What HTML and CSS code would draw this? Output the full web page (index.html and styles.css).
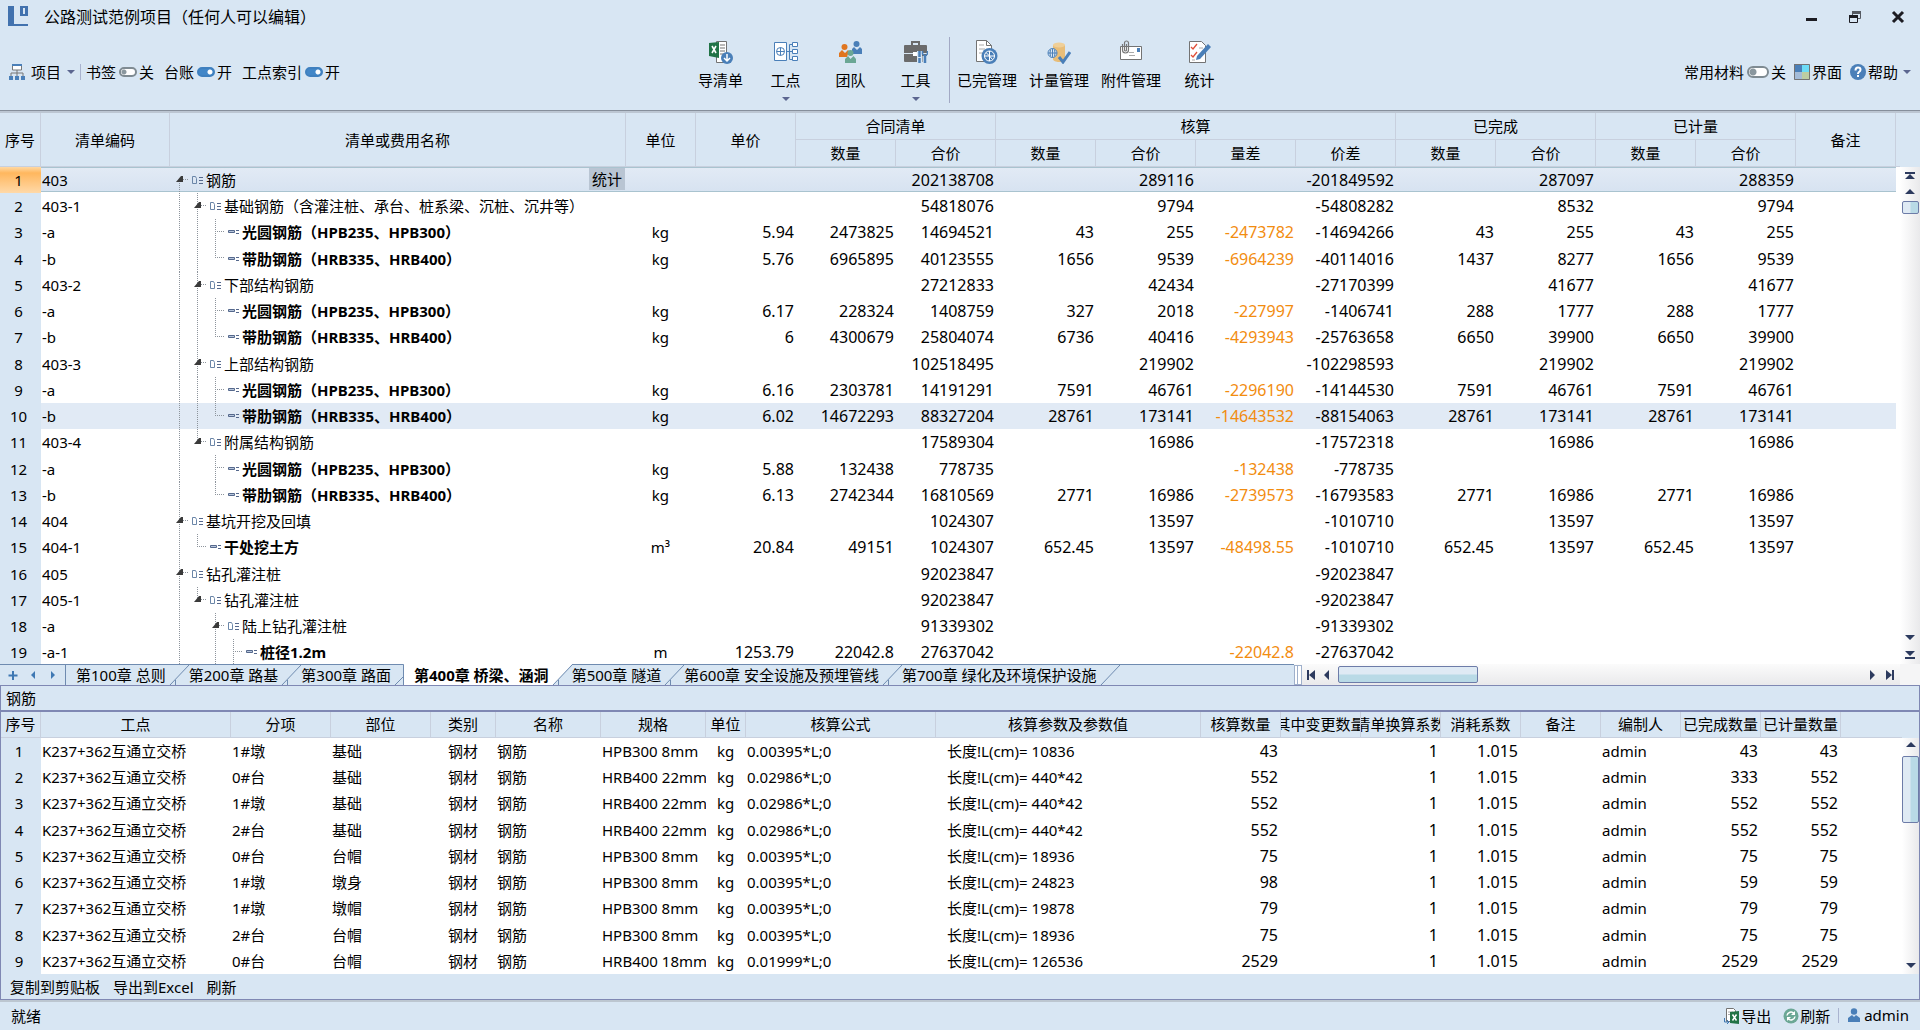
FILE: index.html
```html
<!DOCTYPE html>
<html lang="zh-CN">
<head>
<meta charset="utf-8">
<title>公路测试范例项目</title>
<link rel="stylesheet" href="styles.css">
</head>
<body>
<header class="titlebar">
  <svg class="logo" width="20" height="20" viewBox="0 0 20 20"><path d="M0 0h6v18h14v2H0z" fill="#4272ae"/><path d="M12 0h8v10h-8zM15 2v6h2V2z" fill="#4272ae" fill-rule="evenodd"/></svg>
  <h1 class="title">公路测试范例项目（任何人可以编辑）</h1>
  <div class="window-buttons">
    <button class="win" aria-label="最小化"><svg width="14" height="14"><path d="M1 8h11v3H1z" fill="#1c1c22"/></svg></button>
    <button class="win" aria-label="还原"><svg width="14" height="14"><path d="M4.500 5V1.500h8v7H9" fill="none" stroke="#555a62"/><path d="M4 1h9v3H4z" fill="#555a62"/><path d="M1.500 5.500h8v7h-8z" fill="#d8e6f3" stroke="#1c1c22"/><path d="M1 5h9v3H1z" fill="#1c1c22"/></svg></button>
    <button class="win" aria-label="关闭"><svg width="14" height="14"><path d="M2 2l10 10M12 2L2 12" stroke="#1c1c22" stroke-width="3"/></svg></button>
  </div>
</header>

<nav class="ribbon">
  <div class="ribbon-left">
    <button class="flat project"><svg width="16" height="16"><path d="M3.500 1h9v5h-9z" fill="#fff" stroke="#777"/><path d="M3 0h10v2H3z" fill="#4a7fb8"/><path d="M8 6v6M2 12V9h12v3" fill="none" stroke="#777"/><path d="M0 12h4v4H0zM6 12h4v4H6zM12 12h4v4h-4z" fill="#4a7fb8"/></svg>项目<i class="caret"></i></button>
    <label class="switch">书签<input type="checkbox"><span>关</span></label>
    <label class="switch">台账<input type="checkbox" checked><span>开</span></label>
    <label class="switch">工点索引<input type="checkbox" checked><span>开</span></label>
  </div>
  <div class="tools">
    <button class="tool"><svg width="24" height="24"><path d="M7.500 1.500h10v21h-10z" fill="#fff" stroke="#737373"/><path d="M11 5h5M11 8h5M11 11h5M11 14h4" stroke="#737373"/><path d="M0 3l10-1v16L0 16z" fill="#217346"/><path d="M3 6l4 7M7 6l-4 7" stroke="#fff" stroke-width="1.600"/><circle cx="18" cy="18" r="6" fill="#4a7fb8"/><path d="M18 14v7M15 18l3 3 3-3" fill="none" stroke="#fff" stroke-width="1.500"/></svg>导清单</button>
    <button class="tool"><svg width="24" height="24" fill="none" stroke="#4a7fb8"><path d="M.5 2.500h12v18H.5z" fill="#fff"/><circle cx="6.500" cy="11.500" r="4"/><path d="M2.500 11.500h8M6.500 7.500v8M12.500 11.500h6M15.500 4.500v15M15.500 4.500h3M15.500 19.500h3"/><path d="M18.500 2.500h5v4h-5zM18.500 9.500h5v4h-5zM18.500 16.500h5v4h-5z" fill="#fff"/></svg>工点<i class="caret"></i></button>
    <button class="tool"><svg width="24" height="24"><g fill="#4a7fb8"><circle cx="17.500" cy="4" r="3"/><path d="M13 14V9l2-2 3 3 3-3 2 2v5z"/></g><g fill="#e0761f"><circle cx="5.500" cy="7" r="3"/><path d="M0 17v-4l3-3 3 3 3-3 1 1-2 6z"/></g><g fill="#6ba795"><circle cx="11.500" cy="13" r="3"/><path d="M6 23v-4l3-3 2.500 3 3-3 2.500 3v4z"/></g></svg>团队</button>
    <button class="tool"><svg width="24" height="24"><path d="M8 5V2h7v3" fill="none" stroke="#6b6b6b" stroke-width="2"/><rect y="5" width="23" height="17" rx="1" fill="#6b6b6b"/><path d="M0 13.500h9M14 13.500h9" stroke="#d8e6f3"/><path d="M9 12h4v4H9z" fill="#fff"/><path d="M15.500 11v13M21 16v8" stroke="#d8e6f3" stroke-width="5"/><path d="M15.500 11v6M15.500 18v5M21 16v7" stroke="#4a7fb8" stroke-width="2.500"/><path d="M18.500 11v3l2.500 2 2.500-2v-3" fill="none" stroke="#4a7fb8" stroke-width="1.500"/></svg>工具<i class="caret"></i></button>
    <span class="divider"></span>
    <button class="tool wide"><svg width="24" height="24"><path d="M1.500.5h10l5 5v16h-15z" fill="#fff" stroke="#737373"/><path d="M11.500.5v5h5" fill="none" stroke="#737373"/><path d="M4 5h5M4 9h6M4 13h3" stroke="#aaa"/><circle cx="14.500" cy="16" r="8" fill="#4a7fb8"/><circle cx="14.500" cy="16" r="5" fill="none" stroke="#fff"/><path d="M14.500 11v5h5M9.500 16h5M14.500 16v5M11 12.500l3.500 3.500 3 3.500" fill="none" stroke="#fff"/></svg>已完管理</button>
    <button class="tool wide"><svg width="24" height="24"><path d="M6 5v14c0 4 12 4 12 0V5z" fill="#e8bd78"/><ellipse cx="12" cy="5" rx="6" ry="2.500" fill="#efcf98"/><circle cx="5.500" cy="13" r="4.500" fill="#d8e6f3" stroke="#4a7fb8"/><path d="M1 13h9M5.500 8.500v9M3.500 9.500q-1 3.500 0 7M7.500 9.500q1 3.500 0 7" fill="none" stroke="#4a7fb8"/><path d="M12 17l4 5 7-10" fill="none" stroke="#4a7fb8" stroke-width="3"/></svg>计量管理</button>
    <button class="tool wide"><svg width="24" height="24"><path d="M1.500 6.500h21v13h-21z" fill="#fff" stroke="#737373"/><path d="M18 8h3v4h-3z" fill="#4a7fb8"/><path d="M10 12.500h5M10 15.500h6" stroke="#aaa"/><path d="M3.500 4v6a3 3 0 0 0 6 0V3a2 2 0 0 0-4 0v7a1 1 0 0 0 2 0V4" fill="none" stroke="#777" stroke-width="1.200"/></svg>附件管理</button>
    <button class="tool"><svg width="24" height="24"><path d="M1.500 1.500h12l4 4v17h-16z" fill="#fff" stroke="#737373"/><path d="M3 7l2 2 4-5M3 15l2 2 4-5" fill="none" stroke="#e0503a" stroke-width="1.300"/><path d="M11 8h4M4 20h3" stroke="#aaa"/><path d="M9 16L20 4l3 3-11 12-4 1z" fill="#4a7fb8"/></svg>统计</button>
  </div>
  <div class="ribbon-right">
    <label class="switch big">常用材料<input type="checkbox"><span>关</span></label>
    <button class="flat"><svg width="16" height="16"><path d="M0 0h8v8H0z" fill="#4a7fb8"/><path d="M8 0h8v8H8z" fill="#6cdcf6"/><path d="M0 8h8v8H0z" fill="#a4bcd8"/><path d="M8 8h8v8H8z" fill="#bccda2"/><path d="M.5.5h15v15H.5z" fill="none" stroke="#737373"/></svg>界面</button>
    <button class="flat help"><svg width="16" height="16"><circle cx="8" cy="8" r="8" fill="#4a7fb8"/><path d="M5.500 6.500q0-3 2.500-3t2.500 2.300Q10.500 7 9 8q-1 .7-1 2M8 11v2" fill="none" stroke="#fff" stroke-width="2"/></svg>帮助<i class="caret"></i></button>
  </div>
</nav>

<main class="workspace">
  <section class="grid-wrap main-grid">
    <table class="grid">
      <colgroup><col class="w41"><col class="w129"><col><col class="w70"><col class="w100"><col class="w100"><col class="w100"><col class="w100"><col class="w100"><col class="w100"><col class="w100"><col class="w100"><col class="w100"><col class="w100"><col class="w100"><col class="w100"><col class="w4"></colgroup>
      <thead>
        <tr><th rowspan="2">序号</th><th rowspan="2">清单编码</th><th rowspan="2">清单或费用名称</th><th rowspan="2">单位</th><th rowspan="2">单价</th><th colspan="2">合同清单</th><th colspan="4">核算</th><th colspan="2">已完成</th><th colspan="2">已计量</th><th rowspan="2">备注</th><th rowspan="2" class="filler"></th></tr>
        <tr><th>数量</th><th>合价</th><th>数量</th><th>合价</th><th>量差</th><th>价差</th><th>数量</th><th>合价</th><th>数量</th><th>合价</th></tr>
      </thead>
      <tbody id="bill-rows"></tbody>
    </table>
    <div class="vscroll">
      <svg width="20" height="34"><path d="M5 5h10v2H5zM10 7l5 5H5zM10 22l5 5H5z" fill="#2c3a5e"/></svg>
      <span class="thumb short"></span>
      <svg class="end" width="20" height="32"><path d="M5 3h10l-5 5zM5 19h10l-5 5zM5 25h10v2H5z" fill="#2c3a5e"/></svg>
    </div>
  </section>

  <div class="tab-row">
    <div class="tab-nav">
      <button aria-label="添加"><svg width="20" height="20"><path d="M13 6v9M8.500 10.500h9" stroke="#3f78b3" stroke-width="2"/></svg></button>
      <button aria-label="上一个"><svg width="20" height="20"><path d="M15 6v8l-4-4z" fill="#3f78b3"/></svg></button>
      <button aria-label="下一个"><svg width="20" height="20"><path d="M11 6v8l4-4z" fill="#3f78b3"/></svg></button>
    </div>
    <div class="tabs" id="tabs"></div>
    <div class="hscroll">
      <span class="splitter"></span>
      <svg width="36" height="20"><path d="M5 5h2v10H5zM13 5v10l-6-5zM27 5v10l-5-5z" fill="#2c3a5e"/></svg>
      <span class="thumb wide-thumb"></span>
      <svg class="hend" width="34" height="20"><path d="M4 5v10l5-5zM20 5v10l6-5zM26 5h2v10h-2z" fill="#2c3a5e"/></svg>
    </div>
    <span class="corner"></span>
  </div>

  <section class="panel">
    <h2 class="panel-title">钢筋</h2>
    <div class="grid-wrap detail-grid">
      <table class="grid">
        <colgroup><col class="w40"><col class="w190"><col class="w100"><col class="w100"><col class="w65"><col class="w105"><col class="w105"><col class="w40"><col class="w190"><col class="w265"><col class="w80"><col class="w80"><col class="w80"><col class="w80"><col class="w80"><col class="w80"><col class="w80"><col class="w80"><col></colgroup>
        <thead><tr><th>序号</th><th>工点</th><th>分项</th><th>部位</th><th>类别</th><th>名称</th><th>规格</th><th>单位</th><th>核算公式</th><th>核算参数及参数值</th><th>核算数量</th><th><span class="clip">其中变更数量</span></th><th><span class="clip">清单换算系数</span></th><th>消耗系数</th><th>备注</th><th>编制人</th><th>已完成数量</th><th>已计量数量</th><th class="filler"></th></tr></thead>
        <tbody id="detail-rows"></tbody>
      </table>
      <div class="vscroll">
        <svg width="16" height="18"><path d="M8 4l5 5H3z" fill="#2c3a5e"/></svg>
        <span class="thumb tall"></span>
        <svg class="end" width="16" height="18"><path d="M3 7h10l-5 5z" fill="#2c3a5e"/></svg>
      </div>
    </div>
    <div class="panel-actions"><button>复制到剪贴板</button><button>导出到Excel</button><button>刷新</button></div>
  </section>
</main>

<footer class="status">
  <span>就绪</span>
  <div class="status-right">
    <button class="flat"><svg width="16" height="16"><path d="M2.500.5h7l2 2v11h-9z" fill="#fff" stroke="#737373"/><path d="M4 4h5M4 6.500h4" stroke="#aaa"/><path d="M6 4l9-1v13l-9-1z" fill="#217346"/><path d="M8.500 6.500l4 6M12.500 6.500l-4 6" stroke="#fff" stroke-width="1.500"/><path d="M.5 10v4H5M3 12l2 2-2 2" fill="none" stroke="#3f78b3"/></svg>导出</button>
    <button class="flat"><svg width="16" height="16"><circle cx="8" cy="8" r="7.500" fill="#6ba795"/><path d="M4 7.500a4 4 0 0 1 7-2M12 8.500a4 4 0 0 1-7 2" fill="none" stroke="#fff" stroke-width="1.500"/><path d="M12 3v4H8zM4 13V9h4z" fill="#fff"/></svg>刷新</button>
    <span class="user"><svg width="12" height="15"><circle cx="6" cy="3.500" r="3.200" fill="#4a7fb8"/><path d="M0 14v-4l4-3 2 2 2-2 4 3v4z" fill="#4a7fb8"/></svg>admin</span>
  </div>
</footer>
<script src="app.js"></script>
</body>
</html>
```
FILE: styles.css
```css
* { box-sizing: border-box; }
html, body { height: 100%; }
body {
  margin: 0;
  display: flex;
  flex-direction: column;
  overflow: hidden;
  background: #d8e6f3;
  color: #000;
  font: 15px/20px "Noto Sans", "Noto Sans CJK SC", sans-serif;
}
button {
  margin: 0; padding: 0; border: 0; background: none;
  color: inherit; font: inherit; white-space: nowrap;
}
svg { display: block; flex: none; }

/* title bar */
.titlebar { display: flex; align-items: center; height: 36px; padding: 0 15px 2px 8px; }
.title { margin: 0 0 0 16px; font-size: 16px; font-weight: 400; line-height: 24px; }
.logo { margin-top: -2px; }
.window-buttons { display: flex; gap: 29px; margin-left: auto; }
.win { display: block; }

/* ribbon */
.ribbon {
  display: grid;
  grid-template-columns: 1fr auto 1fr;
  height: 77px;
  padding-bottom: 1px;
  border-bottom: 2px solid #bcc6d2;
  box-shadow: inset 0 -1px #868f9b;
}
.ribbon-left, .ribbon-right { display: flex; align-items: center; height: 72px; padding-left: 9px; }
.ribbon-right { justify-content: flex-end; padding: 0 9px 0 0; }
.flat { display: flex; align-items: center; gap: 2px; }
.project { gap: 6px; padding-right: 5px; border-right: 1px solid #a9b3cf; line-height: 16px; margin-right: 5px; }
.ribbon-right .flat { margin-left: 8px; }
.caret { border: 4px solid transparent; border-top-color: #5b6690; border-bottom: 0; }
.help .caret { margin-left: 3px; }
.switch { display: flex; align-items: center; margin-right: 10px; }
.ribbon-right .switch { margin-right: 0; }
.switch input {
  appearance: none;
  width: 18px; height: 10px; margin: 0 2px 0 3px;
  border: 2px solid #7f8b92; border-radius: 5px;
  background: radial-gradient(circle at 3px 3px, #8a979e 2px, #fff 3px);
}
.switch input:checked {
  border-color: #3f80bf;
  background: radial-gradient(circle at 11px 3px, #fff 2px, #4287c8 3px);
}
.big input { width: 22px; height: 12px; border-radius: 6px; background: radial-gradient(circle at 4px 4px, #8a979e 3px, #fff 4px); }
.tools { display: flex; }
.tool { display: flex; flex-direction: column; align-items: center; width: 65px; padding-top: 4px; }
.tool.wide { width: 72px; }
.tool svg { margin-bottom: 6px; }
.tool .caret { margin-top: 7px; }
.divider { width: 1px; height: 66px; margin: 1px; background: #a2a9c4; }

/* grids */
.workspace { flex: 1; min-height: 0; display: flex; flex-direction: column; }
.grid-wrap { display: flex; background: #fff; }
.main-grid { flex: 1; min-height: 0; overflow: hidden; }
.grid { flex: 1; min-width: 0; width: 100%; table-layout: fixed; border-spacing: 0; align-self: flex-start; }
.w4 { width: 4px; } .w40 { width: 40px; } .w41 { width: 41px; } .w65 { width: 65px; } .w70 { width: 70px; }
.w80 { width: 80px; } .w100 { width: 100px; } .w105 { width: 105px; } .w129 { width: 129px; }
.w190 { width: 190px; } .w265 { width: 265px; }
.grid th {
  height: 27px; padding: 0; overflow: hidden;
  background: #d8e6f3; border: 0 solid #c8d0de; border-width: 0 1px 1px 0;
  font-weight: 400; white-space: nowrap;
}
.detail-grid .grid th { height: 26px; padding-bottom: 2px; }
.grid th.filler { border-right: 0; }
.clip { display: flex; justify-content: center; overflow: hidden; }
.grid td { height: 26px; padding: 0 2px 0 1px; overflow: hidden; white-space: nowrap; }
.grid tr:nth-child(4n) td { height: 27px; }
.grid td.seq { padding: 0 4px 0 0; background: #d8e6f3; text-align: center; }
.grid td.blank { padding: 0; background: #fff; }
.grid .num { text-align: right; font-size: 16px; }
.detail-grid .grid .num { padding-right: 3px; }
.grid .mid { text-align: center; }
.grid .param { padding-left: 11px; }
.grid .diff { color: #f28c0f; }
.hover { background: #e1eaf5; }
.selected { background: linear-gradient(#a9c3cf 1px, #e2eaf5 1px, #d7e3f1 24px, #a9c3cf 24px, #a9c3cf 25px, #fff 25px); }
.grid .selected .seq { background: linear-gradient(#ffd9a4, #ffb75e 6px, #ffd9a8); }

/* name tree */
.grid td.name { padding: 0 1px 0 0; }
.tree { display: flex; align-items: center; height: 26px; }
.grid tr:nth-child(4n) .tree { height: 27px; }
.guide {
  flex: none; align-self: stretch; width: 18px;
  --v: repeating-linear-gradient(#8d949c 0 1px, transparent 1px 2px);
  --h: repeating-linear-gradient(90deg, #8d949c 0 1px, transparent 1px 2px);
  background-repeat: no-repeat;
}
.guide.line { background-image: var(--v); background-size: 1px 100%; background-position: 9px 0; }
.guide.tee { background-image: var(--v), var(--h); background-size: 1px 100%, 9px 1px; background-position: 9px 0, 9px 12px; }
.guide.last { background-image: var(--v), var(--h); background-size: 1px 12px, 9px 1px; background-position: 9px 0, 9px 12px; }
.guide.root { background-image: var(--v), var(--h); background-size: 1px 14px, 9px 1px; background-position: 9px 12px, 9px 12px; }
.node { margin: 0 3px 0 4px; }
.guide svg { margin: 9px 0 0 6px; }
.leaf { font-weight: 700; }
.stat { align-self: flex-start; margin: 1px 0 0 auto; padding: 0 3px; height: 22px; background: #b9c5d3; }

/* scroll bars */
.vscroll {
  display: flex; flex-direction: column; align-items: center;
  flex: none; width: 20px; margin-top: 54px;
  background: linear-gradient(90deg, #fff, #e9e9eb);
  box-shadow: 0 -54px #d8e6f3;
}
.detail-grid .vscroll { width: 17px; margin-top: 26px; box-shadow: 0 -26px #d8e6f3; }
.end { margin-top: auto; }
.hend { margin-left: auto; }
.thumb { flex: none; border: 1px solid #6d7ca8; border-radius: 2px; background: linear-gradient(90deg, #dfeaf4 45%, #b9dae6 55%); }
.short { width: 17px; height: 13px; }
.tall { width: 100%; height: 67px; }
.hscroll { display: flex; align-items: center; flex: 0 0 606px; background: linear-gradient(#fbfbfb, #e9e9eb); }
.splitter { width: 8px; height: 20px; border: 1px solid #9fb0cb; background: linear-gradient(90deg, #fff 2px, #9fb0cb 2px 3px, #fff 3px); }
.wide-thumb { width: 140px; height: 17px; background: linear-gradient(#dfeaf4 45%, #b9dae6 55%); }
.corner { flex: 0 0 20px; background: #f5f5f6; }

/* chapter tabs */
.tab-row { display: flex; height: 21px; }
.tab-nav { display: flex; width: 65px; border-top: 1px solid #6f8bb0; }
.tab-nav button:last-child { flex: 1; }
.tabs { display: flex; flex: 1; min-width: 0; overflow: hidden; border-left: 1px solid #6f8bb0; }
.tabs::before { content: ""; width: 10px; border-top: 1px solid #6f8bb0; }
.tabs::after { content: ""; flex: 1; border-top: 1px solid #6f8bb0; }
.tab { flex: none; padding-right: 1px; border-top: 1px solid #6f8bb0; }
.tab.active { background: #fff; border-color: #fff; font-weight: 700; }

/* detail panel */
.panel { border: 1px solid #7f88b3; }
.panel-title { margin: 0; padding: 2px 5px; height: 26px; border-bottom: 2px solid #7f88b3; font-size: 15px; font-weight: 400; line-height: 20px; }
.panel-actions { display: flex; gap: 13px; height: 25px; padding-left: 9px; }
.panel-actions button { height: 25px; }

/* status bar */
.status { display: flex; justify-content: space-between; align-items: center; height: 30px; padding: 0 11px 1px; border-top: 2px solid #bcc6d0; }
.status-right { display: flex; align-items: center; gap: 12px; }
.status-right .flat { gap: 1px; }
.user { display: flex; align-items: center; gap: 4px; margin-left: -4px; padding-left: 9px; border-left: 1px solid #a9b3cf; line-height: 15px; }
```
FILE: app.js
```js
// Guides: i = root branch, l = passing line, t = branch, e = last branch, s = space
const bill = [
  ["403", "i", "钢筋", 0, "", "", "", "202138708", "", "289116", "", "-201849592", "", "287097", "", "288359"],
  ["403-1", "lt", "基础钢筋（含灌注桩、承台、桩系梁、沉桩、沉井等）", 0, "", "", "", "54818076", "", "9794", "", "-54808282", "", "8532", "", "9794"],
  ["-a", "llt", "光圆钢筋（HPB235、HPB300）", 1, "kg", "5.94", "2473825", "14694521", "43", "255", "-2473782", "-14694266", "43", "255", "43", "255"],
  ["-b", "lle", "带肋钢筋（HRB335、HRB400）", 1, "kg", "5.76", "6965895", "40123555", "1656", "9539", "-6964239", "-40114016", "1437", "8277", "1656", "9539"],
  ["403-2", "lt", "下部结构钢筋", 0, "", "", "", "27212833", "", "42434", "", "-27170399", "", "41677", "", "41677"],
  ["-a", "llt", "光圆钢筋（HPB235、HPB300）", 1, "kg", "6.17", "228324", "1408759", "327", "2018", "-227997", "-1406741", "288", "1777", "288", "1777"],
  ["-b", "lle", "带肋钢筋（HRB335、HRB400）", 1, "kg", "6", "4300679", "25804074", "6736", "40416", "-4293943", "-25763658", "6650", "39900", "6650", "39900"],
  ["403-3", "lt", "上部结构钢筋", 0, "", "", "", "102518495", "", "219902", "", "-102298593", "", "219902", "", "219902"],
  ["-a", "llt", "光圆钢筋（HPB235、HPB300）", 1, "kg", "6.16", "2303781", "14191291", "7591", "46761", "-2296190", "-14144530", "7591", "46761", "7591", "46761"],
  ["-b", "lle", "带肋钢筋（HRB335、HRB400）", 1, "kg", "6.02", "14672293", "88327204", "28761", "173141", "-14643532", "-88154063", "28761", "173141", "28761", "173141"],
  ["403-4", "le", "附属结构钢筋", 0, "", "", "", "17589304", "", "16986", "", "-17572318", "", "16986", "", "16986"],
  ["-a", "lst", "光圆钢筋（HPB235、HPB300）", 1, "kg", "5.88", "132438", "778735", "", "", "-132438", "-778735", "", "", "", ""],
  ["-b", "lse", "带肋钢筋（HRB335、HRB400）", 1, "kg", "6.13", "2742344", "16810569", "2771", "16986", "-2739573", "-16793583", "2771", "16986", "2771", "16986"],
  ["404", "t", "基坑开挖及回填", 0, "", "", "", "1024307", "", "13597", "", "-1010710", "", "13597", "", "13597"],
  ["404-1", "le", "干处挖土方", 1, "m³", "20.84", "49151", "1024307", "652.45", "13597", "-48498.55", "-1010710", "652.45", "13597", "652.45", "13597"],
  ["405", "t", "钻孔灌注桩", 0, "", "", "", "92023847", "", "", "", "-92023847", "", "", "", ""],
  ["405-1", "le", "钻孔灌注桩", 0, "", "", "", "92023847", "", "", "", "-92023847", "", "", "", ""],
  ["-a", "lst", "陆上钻孔灌注桩", 0, "", "", "", "91339302", "", "", "", "-91339302", "", "", "", ""],
  ["-a-1", "lslt", "桩径1.2m", 1, "m", "1253.79", "22042.8", "27637042", "", "", "-22042.8", "-27637042", "", "", "", ""],
];
const detail = [
  ["1#墩", "基础", "HPB300 8mm", "0.00395*L;0", "10836", "43", "43"],
  ["0#台", "基础", "HRB400 22mm", "0.02986*L;0", "440*42", "552", "333"],
  ["1#墩", "基础", "HRB400 22mm", "0.02986*L;0", "440*42", "552", "552"],
  ["2#台", "基础", "HRB400 22mm", "0.02986*L;0", "440*42", "552", "552"],
  ["0#台", "台帽", "HPB300 8mm", "0.00395*L;0", "18936", "75", "75"],
  ["1#墩", "墩身", "HPB300 8mm", "0.00395*L;0", "24823", "98", "59", "59"],
  ["1#墩", "墩帽", "HPB300 8mm", "0.00395*L;0", "19878", "79", "79"],
  ["2#台", "台帽", "HPB300 8mm", "0.00395*L;0", "18936", "75", "75"],
  ["0#台", "台帽", "HRB400 18mm", "0.01999*L;0", "126536", "2529", "2529"],
];

const guideClass = { i: "root", l: "line", t: "tee", e: "last", s: "" };
const arrow = '<svg width="7" height="6"><path d="M0 6L5 0h2v6z" fill="#3a3a3a"/></svg>';
const groupIcon = '<svg class="node" width="11" height="12"><path d="M.5 2.500h3l1 2v5h-4z" fill="none" stroke="#6b86a8"/><path d="M7 3.500h4M7 6.500h4M7 9.500h4" stroke="#55688c"/></svg>';
const leafIcon = '<svg class="node" width="11" height="12"><path d="M.5 4.500h6v2h-6z" fill="#b7c6dc" stroke="#55688c"/><path d="M8 4.500h3M8 7.500h3" stroke="#55688c"/></svg>';

function tree(path, name, leaf, selected) {
  const guides = [...path].map((g, i) =>
    `<span class="guide ${guideClass[g]}">${!leaf && i === path.length - 1 ? arrow : ""}</span>`).join("");
  return `<div class="tree">${guides}${leaf ? leafIcon : groupIcon}<span class="${leaf ? "leaf" : ""}">${name}</span>` +
    `${selected ? '<button class="stat">统计</button>' : ""}</div>`;
}

document.getElementById("bill-rows").innerHTML = bill.map(([code, path, name, leaf, unit, ...nums], i) =>
  `<tr class="${i === 0 ? "selected" : i === 9 ? "hover" : ""}"><td class="seq">${i + 1}</td><td>${code}</td>` +
  `<td class="name">${tree(path, name, leaf, i === 0)}</td><td class="mid">${unit}</td>` +
  nums.map((n, k) => `<td class="num${k === 5 ? " diff" : ""}">${n}</td>`).join("") + '<td></td><td class="blank"></td></tr>').join("");

document.getElementById("detail-rows").innerHTML = detail.map(([item, part, spec, formula, length, qty, done, metered = qty], i) =>
  `<tr><td class="seq">${i + 1}</td><td>K237+362互通立交桥</td><td>${item}</td><td>${part}</td><td class="mid">钢材</td><td>钢筋</td>` +
  `<td>${spec}</td><td class="mid">kg</td><td>${formula}</td><td class="param">长度!L(cm)= ${length}</td><td class="num">${qty}</td>` +
  `<td></td><td class="num">1</td><td class="num">1.015</td><td></td><td>admin</td><td class="num">${done}</td><td class="num">${metered}</td><td></td></tr>`).join("");

const tabs = ["第100章 总则", "第200章 路基", "第300章 路面", "第400章 桥梁、涵洞", "第500章 隧道", "第600章 安全设施及预埋管线", "第700章 绿化及环境保护设施"];
const active = 3;
const line = 'fill="none" stroke="#6f8bb0"';
document.getElementById("tabs").innerHTML = tabs.map((name, i) => {
  let edge = `<path d="M0 .5h22M3 21L22 1M8.500 21v-5" ${line}/>`;
  if (i === active - 1) edge = `<path d="M12 0h10v21H12z" fill="#fff"/><path d="M0 .5h11.500V21M3 21l8-8" ${line}/>`;
  if (i === active) edge = `<path d="M0 0h22L3 21H0z" fill="#fff"/><path d="M3 21L22 1M8.500 21v-5" ${line}/>`;
  if (i === tabs.length - 1) edge = `<path d="M0 .5h22M3 21L22 1" ${line}/>`;
  return `<button class="tab${i === active ? " active" : ""}">${name}</button><svg width="22" height="21">${edge}</svg>`;
}).join("");
```
